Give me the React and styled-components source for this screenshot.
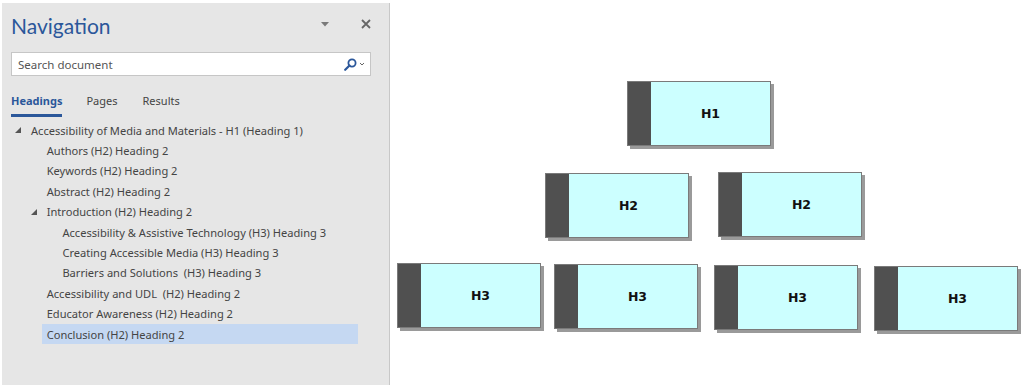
import React from "react";
import styled, { createGlobalStyle } from "styled-components";

const GlobalStyle = createGlobalStyle`
    html, body {
        margin: 0;
        padding: 0;
        background: #ffffff;
    }
    body {
        font-family: "Noto Sans", "Open Sans", sans-serif;
    }
`

const Page = styled.div`
    display: flex;
    flex-direction: row;
    width: 1024px;
    height: 390px;
    overflow: hidden;
`

// Left: the Word navigation pane
const Pane = styled.div`
    box-sizing: border-box;
    width: 388px;
    height: 382px;
    margin: 3px 0 0 2px;
    background: #e6e6e6;
    border-right: 1px solid #c8c8c8;
    display: flex;
    flex-direction: column;
    padding: 0 0 0 9px;
`

const PaneHeader = styled.div`
    display: flex;
    flex-direction: row;
    align-items: center;
    height: 44px;
    padding-right: 16px;
`

const Title = styled.h1`
    flex-grow: 1;
    margin: 0;
    font-family: "Lato", "Noto Sans", sans-serif;
    font-size: 21px;
    font-weight: 400;
    color: #2b579a;
`

const HeaderButton = styled.div`
    display: flex;
    align-items: center;
    justify-content: center;
    width: 14px;
    height: 14px;
    margin-top: -2px;
    margin-left: ${props => props.gap || 0}px;
`

const SearchBox = styled.div`
    box-sizing: border-box;
    display: flex;
    flex-direction: row;
    align-items: center;
    width: 360px;
    height: 24px;
    margin-top: 5px;
    background: #ffffff;
    border: 1px solid #c6c6c6;
    padding: 0 4px 0 6px;
`

const SearchText = styled.span`
    flex-grow: 1;
    font-size: 11.5px;
    color: #555555;
`

const Tabs = styled.div`
    display: flex;
    flex-direction: row;
    margin-top: 13px;
    height: 28px;
`

const Tab = styled.div`
    box-sizing: border-box;
    height: 28px;
    margin-right: ${props => props.gap}px;
    font-size: 11px;
    font-weight: ${props => props.active ? 700 : 400};
    color: ${props => props.active ? "#2b579a" : "#444444"};
    border-bottom: 3px solid ${props => props.active ? "#2b579a" : "transparent"};
    padding-top: 4px;
`

const Tree = styled.div`
    display: flex;
    flex-direction: column;
    width: 344px;
    margin: 3px 0 0 3px;
`

const Row = styled.div`
    display: flex;
    flex-direction: row;
    align-items: center;
    height: 20.4px;
    margin-left: ${props => props.level * 15.7}px;
`

const Toggle = styled.span`
    display: flex;
    width: 12px;
    padding-left: 1px;
    box-sizing: border-box;
`

const Label = styled.span`
    flex-grow: 1;
    display: flex;
    align-items: center;
    height: 100%;
    padding-left: 5px;
    background: ${props => props.selected ? "#c5d8f2" : "transparent"};
    font-size: 11.1px;
    color: #444444;
    white-space: pre;
`

const Expand = () => (
    <svg width="6" height="6" viewBox="0 0 6 6">
        <polygon points="6,0 6,6 0,6" fill="#555" />
    </svg>
)

// Right: the heading level diagram
const Canvas = styled.div`
    position: relative;
    flex-grow: 1;
    height: 390px;
    background: #ffffff;
`

const Node = styled.div`
    position: absolute;
    box-sizing: border-box;
    width: 144px;
    height: 65px;
    display: flex;
    flex-direction: row;
    background: #ccffff;
    border: 1px solid #7a7a7a;
    box-shadow: 3px 3px 0 #9a9a9a;
`

const NodeStrip = styled.div`
    width: 23px;
    background: #505050;
`

const NodeLabel = styled.div`
    flex-grow: 1;
    display: flex;
    align-items: center;
    justify-content: center;
    font-family: "DejaVu Sans", sans-serif;
    font-weight: 700;
    font-size: 12.5px;
    color: #111111;
`

const headings = [
    { text: "Accessibility of Media and Materials - H1 (Heading 1)", level: 0, open: true },
    { text: "Authors (H2) Heading 2", level: 1 },
    { text: "Keywords (H2) Heading 2", level: 1 },
    { text: "Abstract (H2) Heading 2", level: 1 },
    { text: "Introduction (H2) Heading 2", level: 1, open: true },
    { text: "Accessibility & Assistive Technology (H3) Heading 3", level: 2 },
    { text: "Creating Accessible Media (H3) Heading 3", level: 2 },
    { text: "Barriers and Solutions  (H3) Heading 3", level: 2 },
    { text: "Accessibility and UDL  (H2) Heading 2", level: 1 },
    { text: "Educator Awareness (H2) Heading 2", level: 1 },
    { text: "Conclusion (H2) Heading 2", level: 1, selected: true },
]

// canvas x is page x minus 390
const nodes = [
    { label: "H1", x: 237, y: 81 },
    { label: "H2", x: 155, y: 173 },
    { label: "H2", x: 328, y: 172 },
    { label: "H3", x: 7, y: 263 },
    { label: "H3", x: 164, y: 264 },
    { label: "H3", x: 324, y: 265 },
    { label: "H3", x: 484, y: 266 },
]

const NavigationPane = () => (
    <Pane>
        <PaneHeader>
            <Title>Navigation</Title>
            <HeaderButton>
                <svg width="8" height="5" viewBox="0 0 8 5">
                    <polygon points="0,0 8,0 4,4.5" fill="#7a7a7a" />
                </svg>
            </HeaderButton>
            <HeaderButton gap={27}>
                <svg width="10" height="10" viewBox="0 0 10 10">
                    <path d="M1 1 L9 9 M9 1 L1 9" stroke="#666" strokeWidth="1.8" />
                </svg>
            </HeaderButton>
        </PaneHeader>
        <SearchBox>
            <SearchText>Search document</SearchText>
            <svg width="13" height="13" viewBox="0 0 13 13">
                <circle cx="8" cy="5" r="3.6" fill="none" stroke="#2b579a" strokeWidth="1.8" />
                <path d="M5.5 7.5 L1.2 11.8" stroke="#2b579a" strokeWidth="2.2" strokeLinecap="round" />
            </svg>
            <svg width="8" height="6" viewBox="0 0 8 6" style={{ marginLeft: 1 }}>
                <path d="M2 2 L4 4 L6 2" stroke="#666" strokeWidth="1" fill="none" />
            </svg>
        </SearchBox>
        <Tabs>
            <Tab active gap={24}>Headings</Tab>
            <Tab gap={25}>Pages</Tab>
            <Tab>Results</Tab>
        </Tabs>
        <Tree>
            {headings.map((h, i) => (
                <Row key={i} level={h.level}>
                    <Toggle>{h.open && <Expand />}</Toggle>
                    <Label selected={h.selected}>{h.text}</Label>
                </Row>
            ))}
        </Tree>
    </Pane>
)

const App = () => (
    <Page>
        <GlobalStyle />
        <NavigationPane />
        <Canvas>
            {nodes.map((n, i) => (
                <Node key={i} style={{ left: n.x, top: n.y }}>
                    <NodeStrip />
                    <NodeLabel>{n.label}</NodeLabel>
                </Node>
            ))}
        </Canvas>
    </Page>
)

export default App;
